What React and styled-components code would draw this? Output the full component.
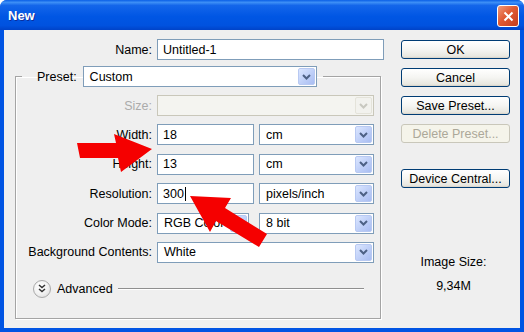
import React from "react";
import styled, { createGlobalStyle } from "styled-components";

const GlobalStyle = createGlobalStyle`
  html, body {
    margin: 0;
    padding: 0;
    background: #ffffff;
  }
  body {
    font-family: "Liberation Sans", Arial, sans-serif;
    font-size: 12.5px;
    color: #000;
  }
`;

// janela estilo XP
const Window = styled.div`
  position: relative;
  width: 524px;
  height: 332px;
  box-sizing: border-box;
  display: flex;
  flex-direction: column;
  background: #0054e3;
  border-radius: 7px 7px 0 0;
  overflow: hidden;
`;

const TitleBar = styled.div`
  height: 30px;
  flex: none;
  display: flex;
  align-items: center;
  justify-content: space-between;
  padding: 0 5px 0 8px;
  background: linear-gradient(
    #0a5fe6 0%,
    #3d8ff6 8%,
    #1466ea 18%,
    #0056e4 55%,
    #0052df 85%,
    #0043c8 100%
  );
`;

const Title = styled.span`
  color: #fff;
  font-weight: bold;
  font-size: 13px;
  text-shadow: 1px 1px 0 #0b2f9e;
`;

const CloseButton = styled.div`
  width: 20px;
  height: 20px;
  border: 1px solid #fff;
  border-radius: 3px;
  background: linear-gradient(135deg, #f09a7a 0%, #e05a32 45%, #c43c1e 100%);
  display: flex;
  align-items: center;
  justify-content: center;
  margin-top: 2px;
`;

const Body = styled.div`
  flex: 1;
  margin: 0 4px 4px;
  background: #efefef;
  display: flex;
  padding: 9px 0 0 11px;
  box-sizing: border-box;
`;

const LeftColumn = styled.div`
  width: 370px;
  display: flex;
  flex-direction: column;
`;

const FieldRow = styled.div`
  display: flex;
  align-items: center;
  height: 21px;
`;

const Label = styled.label`
  width: ${(p) => p.$width || 142}px;
  flex: none;
  text-align: right;
  padding-right: 5px;
  box-sizing: border-box;
  color: ${(p) => (p.$disabled ? "#ababab" : "#000")};
  white-space: nowrap;
`;

const LegendLabel = styled.label`
  padding-right: 6px;
  white-space: nowrap;
`;

const TextInput = styled.div`
  width: ${(p) => p.$width}px;
  height: 21px;
  box-sizing: border-box;
  border: 1px solid #7f9db9;
  background: #fff;
  padding-left: 5px;
  display: flex;
  align-items: center;
  flex: none;
`;

const Caret = styled.span`
  display: inline-block;
  width: 1px;
  height: 14px;
  background: #000;
  margin-left: 1px;
`;

const SelectBox = styled.div`
  width: ${(p) => p.$width}px;
  height: 21px;
  box-sizing: border-box;
  border: 1px solid ${(p) => (p.$disabled ? "#c9c7ba" : "#7f9db9")};
  background: ${(p) => (p.$disabled ? "#f4f4f0" : "#fff")};
  display: flex;
  align-items: center;
  justify-content: space-between;
  padding: 1px;
  flex: none;
`;

const SelectText = styled.span`
  padding-left: 5px;
`;

const DropButton = styled.div`
  width: 17px;
  height: 17px;
  box-sizing: border-box;
  border: 1px solid ${(p) => (p.$disabled ? "#e4e3da" : "#b8c9f2")};
  border-radius: 2px;
  background: ${(p) =>
    p.$disabled
      ? "#f2f2ee"
      : "linear-gradient(135deg, #dbe6ff 0%, #bccdf7 60%, #a9bdf2 100%)"};
  display: flex;
  align-items: center;
  justify-content: center;
`;

const Chevron = ({ color }) => (
  <svg width="9" height="6" viewBox="0 0 9 6">
    <path d="M1 1 L4.5 4.5 L8 1" fill="none" stroke={color} strokeWidth="2" />
  </svg>
);

const Select = ({ width, value, disabled }) => (
  <SelectBox $width={width} $disabled={disabled}>
    <SelectText>{value}</SelectText>
    <DropButton $disabled={disabled}>
      <Chevron color={disabled ? "#c8c8c0" : "#4d6185"} />
    </DropButton>
  </SelectBox>
);

const Group = styled.fieldset`
  margin: 6px 0 0 0;
  padding: 0 0 20px 0;
  width: 366px;
  box-sizing: border-box;
  border: 1px solid #a4a4a4;
  box-shadow: inset 1px 1px 0 #ffffff, 1px 1px 0 #ffffff;
  min-width: 0;
`;

const Legend = styled.legend`
  margin-left: 6px;
  padding: 0 6px 0 15px;
  display: flex;
  align-items: center;
  height: 21px;
`;

const GroupRows = styled.div`
  margin-top: 8px;
  display: flex;
  flex-direction: column;
  gap: 8.4px;
`;

const Controls = styled.div`
  display: flex;
  gap: ${(p) => p.$gap}px;
`;

const AdvancedRow = styled.div`
  margin-top: 17px;
  height: 18px;
  display: flex;
  align-items: center;
  padding: 0 16px 0 17px;
`;

const RoundButton = styled.div`
  width: 16px;
  height: 16px;
  border-radius: 50%;
  border: 1px solid #a9a9a9;
  background: radial-gradient(circle at 40% 35%, #ffffff 0%, #f2f2f2 50%, #d6d6d6 100%);
  display: flex;
  align-items: center;
  justify-content: center;
  flex: none;
`;

const AdvancedText = styled.span`
  margin-left: 6px;
  margin-right: 5px;
`;

const Rule = styled.div`
  flex: 1;
  height: 1px;
  background: #8f8f8f;
  box-shadow: 0 1px 0 #ffffff;
`;

const RightColumn = styled.div`
  width: 109px;
  margin-left: 16px;
  padding-top: 1px;
  display: flex;
  flex-direction: column;
  gap: 9px;
`;

const Button = styled.div`
  height: 19px;
  box-sizing: border-box;
  border: 1px solid ${(p) => (p.$disabled ? "#c9c7ba" : "#003c74")};
  border-radius: 3px;
  background: ${(p) =>
    p.$disabled
      ? "#f5f4ea"
      : "linear-gradient(#ffffff 0%, #f5f5f2 50%, #e8e7e0 90%, #d6d0c5 100%)"};
  color: ${(p) => (p.$disabled ? "#aca899" : "#000")};
  display: flex;
  align-items: center;
  justify-content: center;
  margin-top: ${(p) => p.$push || 0}px;
`;

const InfoText = styled.div`
  text-align: center;
  line-height: 16px;
  margin-top: ${(p) => p.$top}px;
  margin-right: 4px;
`;

const Overlay = styled.svg`
  position: absolute;
  left: 0;
  top: 0;
  pointer-events: none;
`;

export default function App() {
  return (
    <>
      <GlobalStyle />
      <Window>
        <TitleBar>
          <Title>New</Title>
          <CloseButton>
            <svg width="11" height="11" viewBox="0 0 11 11">
              <path d="M1.5 1.5 L9.5 9.5 M9.5 1.5 L1.5 9.5" stroke="#fff" strokeWidth="2" />
            </svg>
          </CloseButton>
        </TitleBar>
        <Body>
          <LeftColumn>
            <FieldRow>
              <Label>Name:</Label>
              <TextInput $width={227}>Untitled-1</TextInput>
            </FieldRow>
            <Group>
              <Legend>
                <LegendLabel>Preset:</LegendLabel>
                <Select width={234} value="Custom" />
              </Legend>
              <GroupRows>
                <FieldRow>
                  <Label $width={141} $disabled>Size:</Label>
                  <Select width={217} value="" disabled />
                </FieldRow>
                <FieldRow>
                  <Label $width={141}>Width:</Label>
                  <Controls $gap={5}>
                    <TextInput $width={97}>18</TextInput>
                    <Select width={115} value="cm" />
                  </Controls>
                </FieldRow>
                <FieldRow>
                  <Label $width={141}>Height:</Label>
                  <Controls $gap={5}>
                    <TextInput $width={97}>13</TextInput>
                    <Select width={115} value="cm" />
                  </Controls>
                </FieldRow>
                <FieldRow>
                  <Label $width={141}>Resolution:</Label>
                  <Controls $gap={5}>
                    <TextInput $width={97}>
                      300
                      <Caret />
                    </TextInput>
                    <Select width={115} value="pixels/inch" />
                  </Controls>
                </FieldRow>
                <FieldRow>
                  <Label $width={141}>Color Mode:</Label>
                  <Controls $gap={10}>
                    <Select width={92} value="RGB Color" />
                    <Select width={115} value="8 bit" />
                  </Controls>
                </FieldRow>
                <FieldRow>
                  <Label $width={141}>Background Contents:</Label>
                  <Select width={217} value="White" />
                </FieldRow>
              </GroupRows>
              <AdvancedRow>
                <RoundButton>
                  <svg width="8" height="9" viewBox="0 0 8 9">
                    <path d="M1 1 L4 3.5 L7 1 M1 5 L4 7.5 L7 5" fill="none" stroke="#333" strokeWidth="1.5" />
                  </svg>
                </RoundButton>
                <AdvancedText>Advanced</AdvancedText>
                <Rule />
              </AdvancedRow>
            </Group>
          </LeftColumn>
          <RightColumn>
            <Button>OK</Button>
            <Button>Cancel</Button>
            <Button>Save Preset...</Button>
            <Button $disabled>Delete Preset...</Button>
            <Button $push={17}>Device Central...</Button>
            <InfoText $top={57}>Image Size:</InfoText>
            <InfoText $top={-1}>9,34M</InfoText>
          </RightColumn>
        </Body>
        <Overlay width="524" height="332" viewBox="0 0 524 332">
          <polygon
            points="77,143 116,143 114,134 152,149 121,172 118,158 80,158"
            fill="#f50000"
          />
          <polygon
            points="190,196 231,198 225,208 267,234 259,247 216,221 210,232"
            fill="#f50000"
          />
        </Overlay>
      </Window>
    </>
  );
}
